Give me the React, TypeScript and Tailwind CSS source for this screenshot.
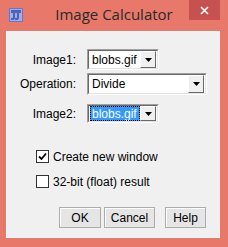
import React from 'react'

const font = { fontFamily: '"Liberation Sans", Arial, sans-serif' }

// small down arrow button of an AWT Choice
const DropButton = () => (
  <div className="flex h-full w-[16px] items-center justify-center border border-t-white border-l-white border-r-[#696969] border-b-[#696969] bg-[#f0f0f0]">
    <svg width="7" height="4" viewBox="0 0 7 4">
      <polygon points="0,0 7,0 3.5,4" fill="#000" />
    </svg>
  </div>
)

type ChoiceProps = {
  value: string
  width: string
  height: string
  selected?: boolean
}

const Choice = ({ value, width, height, selected }: ChoiceProps) => (
  <div className={`flex ${width} ${height} border border-t-[#a0a0a0] border-l-[#a0a0a0] border-r-white border-b-white bg-white`}>
    <div className="flex flex-1 items-center border border-t-[#696969] border-l-[#696969] border-r-[#e3e3e3] border-b-[#e3e3e3] pl-[1px] pr-[1px]">
      <div className={`flex flex-1 items-center h-full ${selected ? 'bg-[#3399ff] text-white outline-1 outline-dotted outline-[#000] -outline-offset-1' : 'text-black'}`}>
        <span className="pl-[2px] text-[12px] leading-none">{value}</span>
      </div>
      <div className="h-full">
        <DropButton />
      </div>
    </div>
  </div>
)

const Checkbox = ({ checked, label }: { checked?: boolean; label: string }) => (
  <div className="flex items-center gap-[4px]">
    <div className="flex h-[13px] w-[13px] items-center justify-center border border-[#333] bg-white">
      {checked && (
        <svg width="9" height="9" viewBox="0 0 9 9">
          <path d="M1 4.5 L3.5 7 L8 1.5" stroke="#000" strokeWidth="1.8" fill="none" />
        </svg>
      )}
    </div>
    <span className="text-[12px] leading-none text-black">{label}</span>
  </div>
)

const Button = ({ label, width }: { label: string; width: string }) => (
  <div className={`flex ${width} h-[21px] items-center justify-center border border-[#acacac] bg-[#e5e5e5] text-[12px] text-black shadow-[inset_1px_1px_0_#fff]`}>
    {label}
  </div>
)

export default function App() {
  return (
    <div className="flex h-[247px] w-[228px] flex-col bg-[#e8786a]" style={font}>
      {/* title bar */}
      <div className="relative flex h-[31px] items-center">
        <svg className="absolute left-[9px] top-[8px]" width="14" height="14" viewBox="0 0 14 14">
          <rect x="0.5" y="0.5" width="13" height="13" fill="#9ab0e8" stroke="#6878c8" />
          <rect x="2" y="2" width="10" height="3" fill="#5060b8" />
          <rect x="4" y="5" width="2" height="6" fill="#5060b8" />
          <rect x="8" y="5" width="2" height="6" fill="#5060b8" />
          <rect x="2" y="10" width="3" height="2" fill="#5060b8" />
          <rect x="6" y="10" width="3" height="2" fill="#5060b8" />
        </svg>
        <div
          className="flex-1 pb-[2px] text-center text-[15px] text-[#2a2a2a]"
          style={{ fontFamily: '"Open Sans", "Noto Sans", sans-serif' }}
        >
          Image Calculator
        </div>
        <div className="absolute right-[8px] top-0 flex h-[20px] w-[31px] items-center justify-center bg-[#c75050]">
          <svg width="9" height="9" viewBox="0 0 9 9">
            <path d="M1 1 L8 8 M8 1 L1 8" stroke="#fff" strokeWidth="1.6" />
          </svg>
        </div>
      </div>

      {/* client area */}
      <div className="ml-[6px] mr-[8px] flex h-[207px] flex-col border border-[#f7f7f7] bg-[#f0f0f0]">
        <div className="mt-[17px] grid grid-cols-[69px_1fr] items-center gap-x-[11px] gap-y-[3px]">
          <span className="text-right text-[12px] text-black">Image1:</span>
          <Choice value="blobs.gif" width="w-[72px]" height="h-[21px]" />
          <span className="text-right text-[12px] text-black">Operation:</span>
          <Choice value="Divide" width="w-[120px]" height="h-[22px]" />
          <span className="mt-[6px] text-right text-[12px] text-black">Image2:</span>
          <div className="mt-[6px]">
            <Choice value="blobs.gif" width="w-[72px]" height="h-[19px]" selected />
          </div>
        </div>

        <div className="mt-[27px] flex flex-col gap-[12px] pl-[29px]">
          <Checkbox checked label="Create new window" />
          <Checkbox label="32-bit (float) result" />
        </div>

        <div className="mt-[19px] flex pl-[52px]">
          <Button label="OK" width="w-[42px]" />
          <div className="w-[3px]" />
          <Button label="Cancel" width="w-[51px]" />
          <div className="w-[10px]" />
          <Button label="Help" width="w-[41px]" />
        </div>
      </div>
    </div>
  )
}
